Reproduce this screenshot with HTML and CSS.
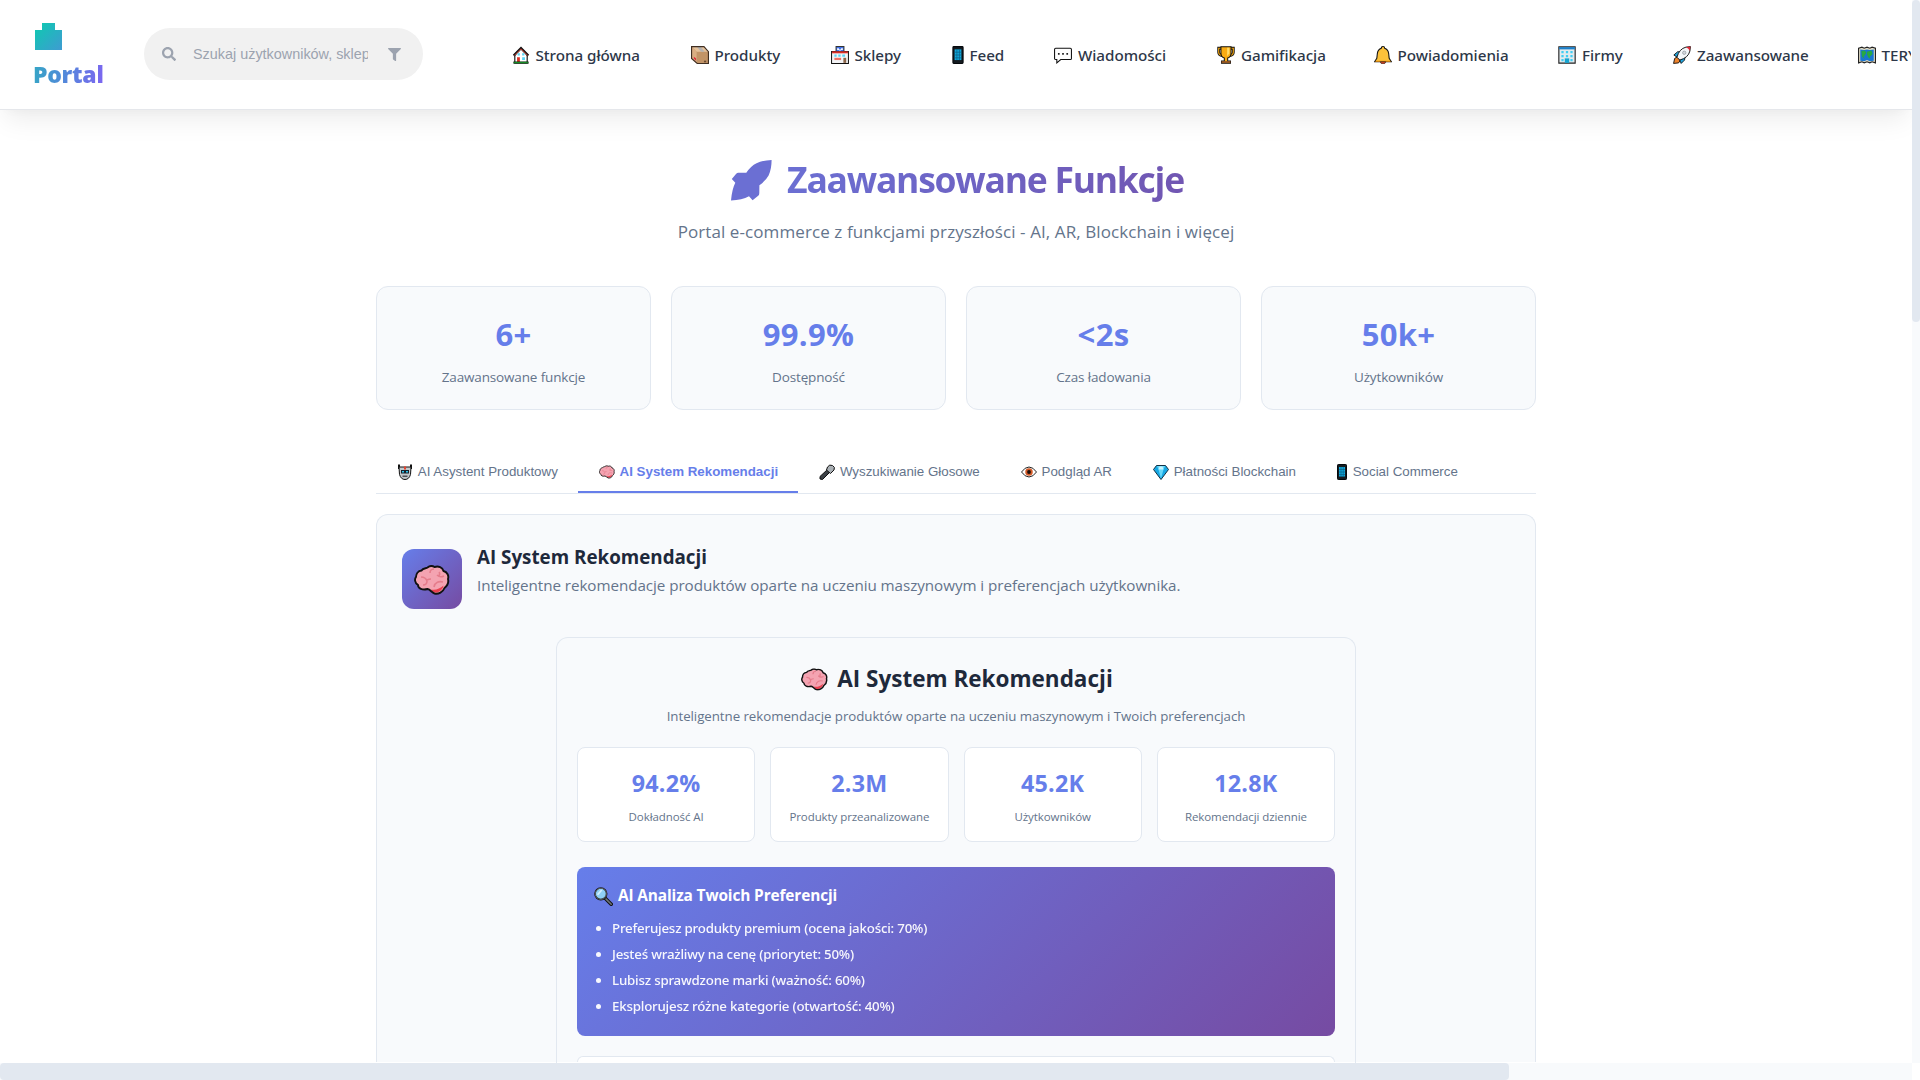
FILE: index.html
```html
<!DOCTYPE html>
<html lang="pl">
<head>
<meta charset="utf-8">
<title>Portal - Zaawansowane Funkcje</title>
<link rel="stylesheet" href="styles.css">
</head>
<body>
<svg class="sprite" aria-hidden="true">
  <symbol id="home" viewBox="0 0 32 32"><path d="M5 15v15h22V15L16 4z" fill="#fff" stroke="#111" stroke-width="2"/><path d="M3 17 16 4l13 13" fill="none" stroke="#111" stroke-width="4.200"/><path d="M4 17 16 5l12 12" fill="none" stroke="#e0483a" stroke-width="1.600"/><path d="M10 13h4v4h-4zM18 13h4v4h-4zM18 20h5v5h-5z" fill="#5ad4f5"/><path d="M9 20h5v9H9z" fill="#e02c22"/><path d="M3 28h26v3H3z" fill="#18a62b" stroke="#111"/></symbol>
  <symbol id="box" viewBox="0 0 32 32"><path d="M1 1h22l8 9v21H11L1 22z" fill="#c29467"/><path d="M1 1h22l8 9H10z" fill="#e5c29c"/><path d="M1 1l9 9v20l-9-8z" fill="#d9ae83"/><path d="M10 1h7l7 9h-6z" fill="#b4b2b0"/><path d="M5 19l4 3v4l-4-4z" fill="#e0283a"/><path d="M23 26h4v3h-4z" fill="#6b4b30"/><path d="M1 1h22l8 9v21H11L1 22z" fill="none" stroke="#3f2e22" stroke-width="2"/></symbol>
  <symbol id="store" viewBox="0 0 32 32"><path d="M1 10h30v21H1z" fill="#f3f4f6" stroke="#111" stroke-width="1.8"/><path d="M9 1h14v9H9z" fill="#3f70e8" stroke="#333" stroke-width="1.8"/><path d="M11 4h3v3h-3zM18 4h3v3h-3zM14 6h4v2h-4z" fill="#fff"/><path d="M2 9.500h28v3.500H2z" fill="#d92b25"/><path d="M6 15h4v4H6zM13 15h4v4h-4zM20 15h5v4h-5z" fill="#5ad4f5"/><path d="M6 21h12v4H6z" fill="#f27063"/><path d="M22 21h5v9h-5z" fill="#8a6447"/></symbol>
  <symbol id="phone" viewBox="0 0 20 32"><rect x="1" y="1" width="18" height="30" rx="1.500" fill="#151b20" stroke="#05090c" stroke-width="2"/><path d="M4 6h12v19H4z" fill="#10a9dc"/><path d="M4 11h12M4 16h12M4 21h12M8 6v19M12.500 6v19" stroke="#0b5f83" stroke-width="1.300"/></symbol>
  <symbol id="chat" viewBox="0 0 32 32"><path d="M3 4h26q2 0 2 2v16q0 2-2 2H12l-7 6v-6H3q-2 0-2-2V6q0-2 2-2z" fill="#fff" stroke="#111" stroke-width="1.900"/><path d="M7 12.500h3v3H7zM14.500 12.500h3v3h-3zM22 12.500h3v3h-3z" fill="#222"/></symbol>
  <symbol id="trophy" viewBox="0 0 32 32"><path d="M8 4H3v7q0 5 7 6M24 4h5v7q0 5-7 6" fill="none" stroke="#111" stroke-width="5"/><path d="M8 4H3v7q0 5 7 6M24 4h5v7q0 5-7 6" fill="none" stroke="#e39b10" stroke-width="2.200"/><path d="M7 1.500h18v11q0 7-6 9v5h5v4H8v-4h5v-5q-6-2-6-9z" fill="#f8ab13" stroke="#111" stroke-width="1.800"/><path d="M18 3h4v10l-4 5z" fill="#ffdb69"/><path d="M8 27h16v3H8z" fill="#8b4e25"/></symbol>
  <symbol id="bell" viewBox="0 0 32 32"><path d="M16 1q3 0 3 3 6 2 7 9l1 9 4 6H1l4-6 1-9q1-7 7-9 0-3 3-3z" fill="#fcc13a" stroke="#111" stroke-width="1.900"/><path d="M3 26h26l1 2H2z" fill="#ed920d"/><path d="M11 28h10q-1 4-5 4t-5-4z" fill="#d94522" stroke="#111" stroke-width="1"/></symbol>
  <symbol id="office" viewBox="0 0 32 32"><path d="M1.500 1.500h29v29h-29z" fill="#e3ebee" stroke="#222" stroke-width="2"/><path d="M2 2h28v4H2z" fill="#1c80cb"/><path d="M6 9h4v4H6zM14 9h4v4h-4zM22 9h4v4h-4zM6 16h4v4H6zM14 16h4v4h-4zM22 16h4v4h-4zM6 23h4v4H6zM22 23h4v4h-4z" fill="#42cdf3"/><path d="M12 22h8v8h-8z" fill="#15a4d1"/></symbol>
  <symbol id="rocket" viewBox="0 0 32 32"><path d="M1 31l2-9 5-3 5 6-3 5z" fill="#ef832b" stroke="#111" stroke-width="1.600"/><path d="M1.500 16l7-6 6 1 7 7-1 7-6 6-3-7-4-4z" fill="#22a6df" stroke="#111" stroke-width="1.600"/><path d="M7 20Q11 5 23 2l8-1-1 8q-3 12-18 16z" fill="#f4f6f8" stroke="#111" stroke-width="1.700"/><path d="M23 2l8-1-1 8q-2-5-7-7z" fill="#df2734"/><circle cx="20" cy="12" r="3" fill="#d4d7db" stroke="#8d939b" stroke-width="1.200"/></symbol>
  <symbol id="map" viewBox="0 0 32 32"><path d="M1 4l6-2 4 2 5-2 5 2 4-2 6 2v26l-6-2-4 2-5-2-5 2-4-2-6 2z" fill="#e6dfc6" stroke="#222" stroke-width="2"/><path d="M4 6l7 1 5-1 5 1 7-1v20l-7 1-5-2-5 2-7-1z" fill="#1976d2"/><path d="M6 9l6-1 3 4-5 7 2 4-5-4zM16 10l8-2 2 6-5 5 1 4-4-3-2-5z" fill="#27a845"/></symbol>
  <symbol id="robot" viewBox="0 0 32 32"><path d="M4 1v9M28 1v9" stroke="#111" stroke-width="4"/><path d="M4 6h24l-1 15q-3 10-11 10T5 21z" fill="#c3c8cc" stroke="#111" stroke-width="2"/><path d="M8 12h16v7H8z" fill="#17202a"/><path d="M10 14h4v3h-4zM18 14h4v3h-4z" fill="#29c4ee"/><path d="M14 5h4v6h-4z" fill="#e6432e"/><path d="M11 23h10v3H11z" fill="#4b4f55"/></symbol>
  <symbol id="brain" viewBox="0 0 36 30"><path d="M7.500 5.500C9 3 12 3.500 13.500 2.500 16 0.500 19 1 20.500 2c4-1.500 8 .5 9 4 4 1 5.500 5 4.500 8 1 4-1 7-3.500 9-1.500 4-6 6.500-10 5.500-3-1-4-4-7-4.500-5 1.500-9.500-.5-9.500-4C.5 17.500.5 14 2 12c0-3 2-6 5.500-6.500z" fill="#f4a3b1"/><path d="M17 24.500c5 1 9-1 12.500-4-.5 4-4.500 7.500-9 7-1.500-.5-2.500-1.500-3.500-3z" fill="#e8404f"/><path d="M7 12c3 0 5 1 6 4M13 16c0 3-2 4-4 4M13 15c2-1 3-1 4-1M16 8c0-2 1-4 4-4M23 10c2 2 5 2 7 1M25 11c1-2 1-3 0-4M20 22c1-5 5-6 9-5" fill="none" stroke="#e57d8c" stroke-width="1.600"/><path d="M7.500 5.500C9 3 12 3.500 13.500 2.500 16 0.500 19 1 20.500 2c4-1.500 8 .5 9 4 4 1 5.500 5 4.500 8 1 4-1 7-3.500 9-1.500 4-6 6.500-10 5.500-3-1-4-4-7-4.500-5 1.500-9.500-.5-9.500-4C.5 17.500.5 14 2 12c0-3 2-6 5.500-6.500z" fill="none" stroke="#111" stroke-width="1.900"/></symbol>
  <symbol id="mic" viewBox="0 0 32 32"><path d="M18 10l5 5L7 31l-5-1 0-5z" fill="#3c4146" stroke="#111" stroke-width="2"/><path d="M17 6q4-6 10-3t3 9l-7 7-8-7z" fill="#aab0b5" stroke="#111" stroke-width="2"/></symbol>
  <symbol id="eye" viewBox="0 0 32 32"><path d="M1 16Q8 6 16 6t15 10Q24 26 16 26T1 16z" fill="#fff" stroke="#222" stroke-width="2"/><circle cx="16" cy="16" r="7.500" fill="#d35a27"/><circle cx="16" cy="16" r="3.800" fill="#1b0d08"/></symbol>
  <symbol id="gem" viewBox="0 0 32 32"><path d="M7 3h18l6 8-15 20L1 11z" fill="#18a8e4" stroke="#123246" stroke-width="2"/><path d="M8 4h16l-3 7 -5 18-5-18z" fill="#68d9fa"/><path d="M13 5h6l2 6H11z" fill="#c6f4ff"/></symbol>
  <symbol id="lens" viewBox="0 0 32 32"><path d="M18 18l11 11" stroke="#111" stroke-width="6" stroke-linecap="round"/><path d="M20 20l9 9" stroke="#6f767b" stroke-width="2.600" stroke-linecap="round"/><circle cx="11.500" cy="11.500" r="9.800" fill="#8fd0f5" stroke="#111" stroke-width="2.800"/><circle cx="11.500" cy="11.500" r="9.500" fill="none" stroke="#8b9196" stroke-width="1"/><path d="M6 13l7-8" stroke="#d6f0fe" stroke-width="3"/></symbol>
</svg>

<header class="topbar">
  <a class="logo">
    <svg class="logo-mark" viewBox="0 0 27 27"><defs><linearGradient id="lg" x1="0" y1="0" x2="1" y2="1"><stop offset="0" stop-color="#0ccbaf"/><stop offset="1" stop-color="#3f9bd2"/></linearGradient></defs><path d="M7 0h13v7h7v20H0V7h7z" fill="url(#lg)"/></svg>
    <span class="logo-text">Portal</span>
  </a>
  <div class="search">
    <svg class="search-icon" viewBox="0 0 512 512"><path fill="currentColor" d="M505 442.700L405.300 343c-4.500-4.500-10.600-7-17-7H372c27.600-35.300 44-79.700 44-128C416 93.100 322.900 0 208 0S0 93.100 0 208s93.100 208 208 208c48.300 0 92.700-16.400 128-44v16.300c0 6.400 2.500 12.500 7 17l99.700 99.700c9.400 9.400 24.600 9.400 33.900 0l28.300-28.300c9.400-9.400 9.400-24.600.1-34zM208 336c-70.700 0-128-57.200-128-128 0-70.700 57.200-128 128-128 70.700 0 128 57.200 128 128 0 70.700-57.200 128-128 128z"/></svg>
    <span class="search-text">Szukaj użytkowników, sklepów</span>
    <svg class="filter-icon" viewBox="0 0 512 512"><path fill="currentColor" d="M488 0H24C2.700 0-8 25.900 7.100 41L192 225.900V432c0 7.800 3.800 15.200 10.200 19.700l80 56C298 518.700 320 507.500 320 488V225.900L504.900 41C520 25.900 509.300 0 488 0z"/></svg>
  </div>
  <nav class="nav">
    <a><svg class="em"><use href="#home"/></svg>Strona główna</a>
    <a><svg class="em"><use href="#box"/></svg>Produkty</a>
    <a><svg class="em"><use href="#store"/></svg>Sklepy</a>
    <a><svg class="em em-phone"><use href="#phone"/></svg>Feed</a>
    <a><svg class="em"><use href="#chat"/></svg>Wiadomości</a>
    <a><svg class="em"><use href="#trophy"/></svg>Gamifikacja</a>
    <a><svg class="em"><use href="#bell"/></svg>Powiadomienia</a>
    <a><svg class="em"><use href="#office"/></svg>Firmy</a>
    <a><svg class="em"><use href="#rocket"/></svg>Zaawansowane</a>
    <a><svg class="em"><use href="#map"/></svg>TERYT</a>
  </nav>
</header>

<main class="page">
  <h1 class="title">
    <svg class="title-icon" viewBox="0 0 41 41"><path fill="#6b6fd3" d="M40.600 0Q32 .3 25.500 3.300 20 6 15.300 12.700L7 12.800Q5.600 13 5 14L.8 19 4.300 22.700Q1 29 0 40.600 11 40 18 36.300L21.600 40.300 27.500 35.500Q28.300 34.500 28.300 33L28.400 25.200Q35 20.500 37.600 15.500 40.600 9 40.600 0z"/></svg>
    <span>Zaawansowane Funkcje</span>
  </h1>
  <p class="subtitle">Portal e-commerce z funkcjami przyszłości - AI, AR, Blockchain i więcej</p>

  <section class="stats">
    <div class="stat"><b>6+</b><span class="stat-label">Zaawansowane funkcje</span></div>
    <div class="stat"><b>99.9%</b><span class="stat-label">Dostępność</span></div>
    <div class="stat"><b>&lt;2s</b><span class="stat-label">Czas ładowania</span></div>
    <div class="stat"><b>50k+</b><span class="stat-label">Użytkowników</span></div>
  </section>

  <div class="tabs">
    <button><svg class="tem"><use href="#robot"/></svg>AI Asystent Produktowy</button>
    <button class="active"><svg class="tem"><use href="#brain"/></svg>AI System Rekomendacji</button>
    <button><svg class="tem"><use href="#mic"/></svg>Wyszukiwanie Głosowe</button>
    <button><svg class="tem"><use href="#eye"/></svg>Podgląd AR</button>
    <button><svg class="tem"><use href="#gem"/></svg>Płatności Blockchain</button>
    <button><svg class="tem tem-phone"><use href="#phone"/></svg>Social Commerce</button>
  </div>

  <section class="panel">
    <div class="panel-head">
      <div class="panel-icon"><svg viewBox="0 0 36 30"><use href="#brain"/></svg></div>
      <div>
        <h2>AI System Rekomendacji</h2>
        <p>Inteligentne rekomendacje produktów oparte na uczeniu maszynowym i preferencjach użytkownika.</p>
      </div>
    </div>
    <div class="demo">
      <h3><svg viewBox="0 0 36 30"><use href="#brain"/></svg>AI System Rekomendacji</h3>
      <p class="demo-sub">Inteligentne rekomendacje produktów oparte na uczeniu maszynowym i Twoich preferencjach</p>
      <div class="metrics">
        <div class="metric"><b>94.2%</b><span class="metric-label">Dokładność AI</span></div>
        <div class="metric"><b>2.3M</b><span class="metric-label">Produkty przeanalizowane</span></div>
        <div class="metric"><b>45.2K</b><span class="metric-label">Użytkowników</span></div>
        <div class="metric"><b>12.8K</b><span class="metric-label">Rekomendacji dziennie</span></div>
      </div>
      <div class="analysis">
        <h4><svg><use href="#lens"/></svg>AI Analiza Twoich Preferencji</h4>
        <ul>
          <li>Preferujesz produkty premium (ocena jakości: 70%)</li>
          <li>Jesteś wrażliwy na cenę (priorytet: 50%)</li>
          <li>Lubisz sprawdzone marki (ważność: 60%)</li>
          <li>Eksplorujesz różne kategorie (otwartość: 40%)</li>
        </ul>
      </div>
      <div class="next-card"></div>
    </div>
  </section>
</main>
<div class="vbar"><i></i></div>
<div class="hbar"><i></i></div>
</body>
</html>
```
FILE: styles.css
```css
* { box-sizing: border-box; }
html, body { margin: 0; height: 1080px; overflow: hidden; }
body { background: #fff; font-family: "Open Sans", "Noto Sans", sans-serif; color: #1e293b; position: relative; }
h1, h2, h3, h4, p, ul { margin: 0; padding: 0; font-weight: inherit; }
.sprite { position: absolute; width: 0; height: 0; }

/* Top bar */
.topbar { display: flex; align-items: center; width: 1912px; height: 110px; padding-left: 33px; background: #fff; border-bottom: 1px solid #e5e7eb; box-shadow: 0 14px 25px -5px rgba(0,0,0,.08), 0 6px 10px -6px rgba(0,0,0,.03); }
.logo { flex: none; width: 111px; padding-top: 5px; display: flex; flex-direction: column; align-items: flex-start; }
.logo-mark { width: 27px; height: 27px; margin-left: 2px; }
.logo-text { font-weight: 800; font-size: 23px; line-height: 36px; margin-top: 6px; letter-spacing: -.3px; background: linear-gradient(100deg, #33a8c4, #5585dc 50%, #7f64f2); -webkit-background-clip: text; background-clip: text; color: transparent; }
.search { flex: none; display: flex; align-items: center; width: 279px; height: 52px; margin-bottom: 1px; padding: 0 22px 0 18px; border-radius: 26px; background: #f1f1f1; color: #9ca3af; }
.search-icon { width: 14px; height: 14px; }
.search-text { width: 175px; margin: 0 20px 0 17px; overflow: hidden; white-space: nowrap; font: 14.400px/20px "Liberation Sans", sans-serif; }
.filter-icon { width: 13px; height: 13px; }
.nav { flex: none; display: grid; grid-template-columns: 179px 140px 121px 102.500px 163px 156.500px 184.500px 115px 184.500px 54px; margin-left: 87px; padding-top: 1px; width: 1401px; overflow: hidden; }
.nav a { display: flex; align-items: center; white-space: nowrap; font-family: "Noto Sans", sans-serif; font-size: 15.200px; line-height: 24px; letter-spacing: -.03px; font-weight: 500; color: #2d3748; }
.em { flex: none; width: 18px; height: 18px; margin: 0 6px 0 1.500px; }
.em-phone { width: 12px; }

/* Page heading */
.page { width: 1160px; margin: 0 auto; padding-top: 40px; position: relative; left: -4px; }
.title { display: flex; justify-content: center; align-items: center; height: 56px; padding-left: 3px; font-size: 35.500px; font-weight: 700; letter-spacing: -1.250px; gap: 15px; }
.title-icon { width: 41px; height: 41px; margin-top: 5px; }
.title span { margin-top: 2px; background: linear-gradient(100deg, #6b6fd3, #7156b2); -webkit-background-clip: text; background-clip: text; color: transparent; }
.subtitle { margin-top: 12px; line-height: 28px; font-size: 17px; letter-spacing: .09px; text-align: center; color: #64748b; }

/* Summary cards */
.stats { display: grid; grid-template-columns: repeat(4, 1fr); gap: 20px; margin-top: 40px; }
.stat { height: 124px; padding-top: 25px; border: 1px solid #e2e8f0; border-radius: 12px; background: #f8fafc; text-align: center; }
.stat b { display: block; font-size: 31px; line-height: 44px; letter-spacing: .3px; font-weight: 700; color: #667eea; }
.stat-label { display: block; margin-top: 11px; font-size: 13.500px; line-height: 20px; letter-spacing: -.15px; color: #64748b; }

/* Tabs */
.tabs { display: flex; height: 44px; margin-top: 40px; border-bottom: 1px solid #e2e8f0; }
.tabs button { display: flex; align-items: center; height: 43px; padding: 3px 20px 0; border: 0; border-bottom: 2px solid transparent; background: none; font: 13.333px/16px "Liberation Sans", sans-serif; color: #64748b; white-space: nowrap; }
.tabs .active { font-weight: 700; color: #667eea; border-bottom-color: #667eea; }
.tem { width: 16px; height: 16px; margin: 0 4.600px 0 1.200px; }
.tem-phone { width: 10px; margin-right: 5.500px; }

/* Active tab panel */
.panel { height: 548px; margin-top: 20px; padding: 25px; border: 1px solid #e2e8f0; border-bottom: 0; border-radius: 12px 12px 0 0; background: #f8fafc; }
.panel-head { display: flex; gap: 15px; height: 97px; }
.panel-icon { display: flex; align-items: center; justify-content: center; width: 60px; height: 60px; margin-top: 9px; border-radius: 12px; background: linear-gradient(135deg, #667eea, #764ba2); }
.panel-icon svg { width: 36px; height: 30px; margin-top: 2px; }
.panel-head h2 { font-size: 18.800px; line-height: 35px; font-weight: 700; }
.panel-head p { margin-top: -2px; font-size: 15.200px; line-height: 24px; letter-spacing: -.05px; color: #64748b; }
.demo { width: 800px; height: 426px; margin: 0 auto; padding: 20px; border: 1px solid #e2e8f0; border-bottom: 0; border-radius: 12px 12px 0 0; }
.demo h3 { display: flex; justify-content: center; align-items: center; gap: 9px; padding-left: 2px; font-size: 22.500px; line-height: 42px; font-weight: 700; }
.demo h3 svg { width: 27px; height: 23px; }
.demo-sub { margin-top: 5px; text-align: center; font-size: 13.300px; line-height: 22px; letter-spacing: -.05px; color: #64748b; }
.metrics { display: grid; grid-template-columns: repeat(4, 1fr); gap: 15px; margin-top: 20px; }
.metric { height: 95px; padding-top: 19px; border: 1px solid #e2e8f0; border-radius: 8px; background: #fff; text-align: center; }
.metric b { display: block; font-size: 23.300px; line-height: 32px; letter-spacing: .2px; font-weight: 700; color: #667eea; }
.metric-label { display: block; margin-top: 9px; font-size: 11.500px; line-height: 18px; letter-spacing: -.08px; color: #64748b; white-space: nowrap; }
.analysis { height: 169px; margin-top: 25px; padding: 16px 15px; border-radius: 8px; background: linear-gradient(135deg, #667eea, #764ba2); color: #fff; }
.analysis h4 { display: flex; align-items: center; font-size: 15.400px; line-height: 26px; letter-spacing: -.12px; font-weight: 700; }
.analysis h4 svg { width: 19px; height: 19px; margin: 0 5.500px 0 1.500px; }
.analysis ul { margin-top: 5.500px; padding-left: 20px; list-style: disc; opacity: .95; }
.analysis li { font-family: "Noto Sans", sans-serif; font-size: 13.300px; line-height: 26px; letter-spacing: -.2px; font-weight: 500; }
.next-card { height: 6px; margin-top: 20px; border: 1px solid #e2e8f0; border-bottom: 0; border-radius: 8px 8px 0 0; background: #fff; }

/* Scrollbars */
.vbar { position: absolute; right: 0; top: 0; width: 8px; height: 1080px; background: #fff; }
.vbar::before { content: ""; position: absolute; inset: 0 0 17px; background: #f8fafc; }
.vbar i { position: absolute; left: 0; top: 0; width: 8px; height: 322px; border-radius: 4px; background: #e2e8f0; }
.hbar { position: absolute; left: 0; bottom: 0; width: 1912px; height: 17px; background: #f8fafc; }
.hbar i { display: block; width: 1509px; height: 17px; border-radius: 4px; background: #e2e8f0; }
```
